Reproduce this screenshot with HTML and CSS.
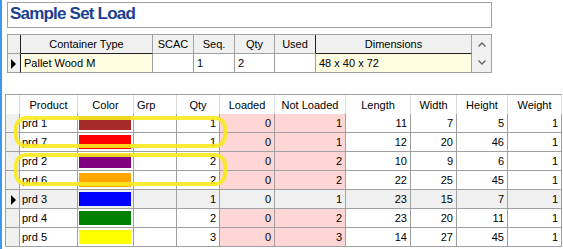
FILE: index.html
```html
<!DOCTYPE html>
<html lang="en">
<head>
    <meta charset="UTF-8">
    <meta name="viewport" content="width=device-width, initial-scale=1.0">
    <title>Sample Set Load</title>
    <link rel="stylesheet" href="styles.css">
</head>
<body>
    <div class="window">
        <div class="title-box"><h1 class="title">Sample Set Load</h1></div>

        <table class="grid grid-top">
            <colgroup>
                <col class="c-ind-top"><col class="c-type"><col class="c-scac"><col class="c-seq"><col class="c-qty-top"><col class="c-used"><col class="c-dims"><col class="c-scroll">
            </colgroup>
            <tr class="head">
                <th class="ind edge"></th>
                <th class="focus-b">Container Type</th>
                <th>SCAC</th>
                <th>Seq.</th>
                <th>Qty</th>
                <th class="edge">Used</th>
                <th class="focus-b">Dimensions</th>
                <td class="scroll" rowspan="2">
                    <div class="scroll-btns">
                        <svg width="8" height="5" viewBox="0 0 8 5"><polyline points="0.5,4.5 4,1 7.5,4.5" fill="none" stroke="#606060" stroke-width="1.3"/></svg>
                        <svg width="8" height="5" viewBox="0 0 8 5"><polyline points="0.5,0.5 4,4 7.5,0.5" fill="none" stroke="#606060" stroke-width="1.3"/></svg>
                    </div>
                </td>
            </tr>
            <tr>
                <td class="ind edge"><span class="arrow"></span></td>
                <td class="hl">Pallet Wood M</td>
                <td></td>
                <td>1</td>
                <td>2</td>
                <td></td>
                <td class="hl">48 x 40 x 72</td>
            </tr>
        </table>

        <div class="grid-wrap">
            <table class="grid grid-main">
                <colgroup>
                    <col class="c-ind"><col class="c-prod"><col class="c-color"><col class="c-grp"><col class="c-qty"><col class="c-loaded"><col class="c-notl"><col class="c-len"><col class="c-wid"><col class="c-hgt"><col class="c-wgt">
                </colgroup>
                <tr class="head">
                    <th class="ind"></th>
                    <th>Product</th>
                    <th>Color</th>
                    <th class="left">Grp</th>
                    <th>Qty</th>
                    <th>Loaded</th>
                    <th>Not Loaded</th>
                    <th>Length</th>
                    <th>Width</th>
                    <th>Height</th>
                    <th>Weight</th>
                </tr>
                <tr>
                    <td class="ind"></td><td>prd 1</td><td class="color"><span class="swatch" style="background:#a52a2a"></span></td><td></td>
                    <td class="num">1</td><td class="num pink">0</td><td class="num pink">1</td><td class="num">11</td><td class="num">7</td><td class="num">5</td><td class="num">1</td>
                </tr>
                <tr>
                    <td class="ind"></td><td>prd 7</td><td class="color"><span class="swatch" style="background:#ff0000"></span></td><td></td>
                    <td class="num">1</td><td class="num pink">0</td><td class="num pink">1</td><td class="num">12</td><td class="num">20</td><td class="num">46</td><td class="num">1</td>
                </tr>
                <tr>
                    <td class="ind"></td><td>prd 2</td><td class="color"><span class="swatch" style="background:#800080"></span></td><td></td>
                    <td class="num">2</td><td class="num pink">0</td><td class="num pink">2</td><td class="num">10</td><td class="num">9</td><td class="num">6</td><td class="num">1</td>
                </tr>
                <tr>
                    <td class="ind"></td><td>prd 6</td><td class="color"><span class="swatch" style="background:#ffa500"></span></td><td></td>
                    <td class="num">2</td><td class="num pink">0</td><td class="num pink">2</td><td class="num">22</td><td class="num">25</td><td class="num">45</td><td class="num">1</td>
                </tr>
                <tr class="current">
                    <td class="ind"><span class="arrow"></span></td><td>prd 3</td><td class="color"><span class="swatch" style="background:#0000ff"></span></td><td></td>
                    <td class="num">1</td><td class="num pink">0</td><td class="num pink">1</td><td class="num">23</td><td class="num">15</td><td class="num">7</td><td class="num">1</td>
                </tr>
                <tr>
                    <td class="ind"></td><td>prd 4</td><td class="color"><span class="swatch" style="background:#008000"></span></td><td></td>
                    <td class="num">2</td><td class="num pink">0</td><td class="num pink">2</td><td class="num">23</td><td class="num">20</td><td class="num">11</td><td class="num">1</td>
                </tr>
                <tr>
                    <td class="ind"></td><td>prd 5</td><td class="color"><span class="swatch" style="background:#ffff00"></span></td><td></td>
                    <td class="num">3</td><td class="num pink">0</td><td class="num pink">3</td><td class="num">14</td><td class="num">27</td><td class="num">45</td><td class="num">1</td>
                </tr>
            </table>
            <div class="mark mark-a"></div>
            <div class="mark mark-b"></div>
        </div>
    </div>
</body>
</html>
```

FILE: styles.css
```css
body {
    margin: 0;
    font-family: "Liberation Sans", Arial, sans-serif;
    font-size: 11px;
    color: #000;
    background-color: white;
}
.window {
    height: 249px;
    box-sizing: border-box;
    border-left: 2px solid #3f97ec;
    padding-top: 2px;
    overflow: hidden;
}
.title-box {
    margin-left: 5px;
    width: 485px;
    height: 26px;
    box-sizing: border-box;
    border: 1px solid #a0a0a0;
    padding-left: 2px;
}
.title {
    margin: 0;
    font-size: 17px;
    font-weight: bold;
    line-height: 22px;
    letter-spacing: -0.8px;
    color: #1b3f93;
}

/* grids */
.grid {
    border-collapse: separate;
    border-spacing: 0;
    table-layout: fixed;
    border-top: 1px solid #a0a0a0;
    border-left: 1px solid #a0a0a0;
}
.grid th,
.grid td {
    box-sizing: border-box;
    height: 19px;
    padding: 0 3px;
    border-right: 1px solid #a0a0a0;
    border-bottom: 1px solid #a0a0a0;
    line-height: 14px;
    font-weight: normal;
    white-space: nowrap;
    overflow: hidden;
    text-align: left;
}
.grid th {
    text-align: center;
}
.grid th.left {
    text-align: left;
}
.grid .num {
    text-align: right;
}
.ind {
    background-color: #f0f0f0;
    padding: 0 0 0 5px !important;
}
.arrow {
    display: inline-block;
    vertical-align: middle;
    border-left: 5px solid #000;
    border-top: 5px solid transparent;
    border-bottom: 5px solid transparent;
}

/* top grid */
.grid-top {
    width: 485px;
    margin: 6px 0 0 5px;
}
.grid-top .head th {
    background-color: #f0f0f0;
}
.grid-top .ind {
    padding-left: 3px !important;
}
.grid-top .edge {
    border-right-color: #202020;
}
.grid-top .focus-b {
    border-bottom-color: #202020;
}
.grid-top .hl {
    background-color: #fffde2;
}
.scroll {
    background-color: #f0f0f0;
    padding: 0 !important;
    vertical-align: top;
}
.scroll-btns {
    display: flex;
    flex-direction: column;
    align-items: center;
    gap: 13px;
    padding-top: 7px;
}
.scroll-btns svg {
    display: block;
}
.c-ind-top { width: 13px; }
.c-type { width: 132px; }
.c-scac { width: 41px; }
.c-seq { width: 41px; }
.c-qty-top { width: 40px; }
.c-used { width: 41px; }
.c-dims { width: 156px; }
.c-scroll { width: 20px; }

/* main grid */
.grid-wrap {
    position: relative;
    margin: 21px 0 0 3px;
}
.grid-main {
    width: 557px;
}
.grid-main .head th {
    background-color: white;
    border-bottom: none;
    border-right-color: #dadada;
}
.grid-main td:nth-child(2) {
    padding-left: 2px;
}
.grid-main .pink {
    background-color: #ffd6d6;
}
.grid-main .current td {
    background-color: #f0f0f0;
}
.color {
    padding: 0 2px 0 1px !important;
}
.swatch {
    display: block;
    height: 14px;
}
.c-ind { width: 14px; }
.c-prod { width: 58px; }
.c-color { width: 56px; }
.c-grp { width: 43px; }
.c-qty { width: 43px; }
.c-loaded { width: 55px; }
.c-notl { width: 71px; }
.c-len { width: 65px; }
.c-wid { width: 46px; }
.c-hgt { width: 51px; }
.c-wgt { width: 54px; }

/* highlight marks drawn over the grid */
.mark {
    position: absolute;
    left: 9px;
    width: 213px;
    box-sizing: border-box;
    border: 4px solid rgba(250, 234, 30, 0.9);
    border-radius: 12px;
}
.mark-a {
    top: 22px;
    height: 32px;
}
.mark-b {
    top: 59px;
    height: 33px;
}
```
